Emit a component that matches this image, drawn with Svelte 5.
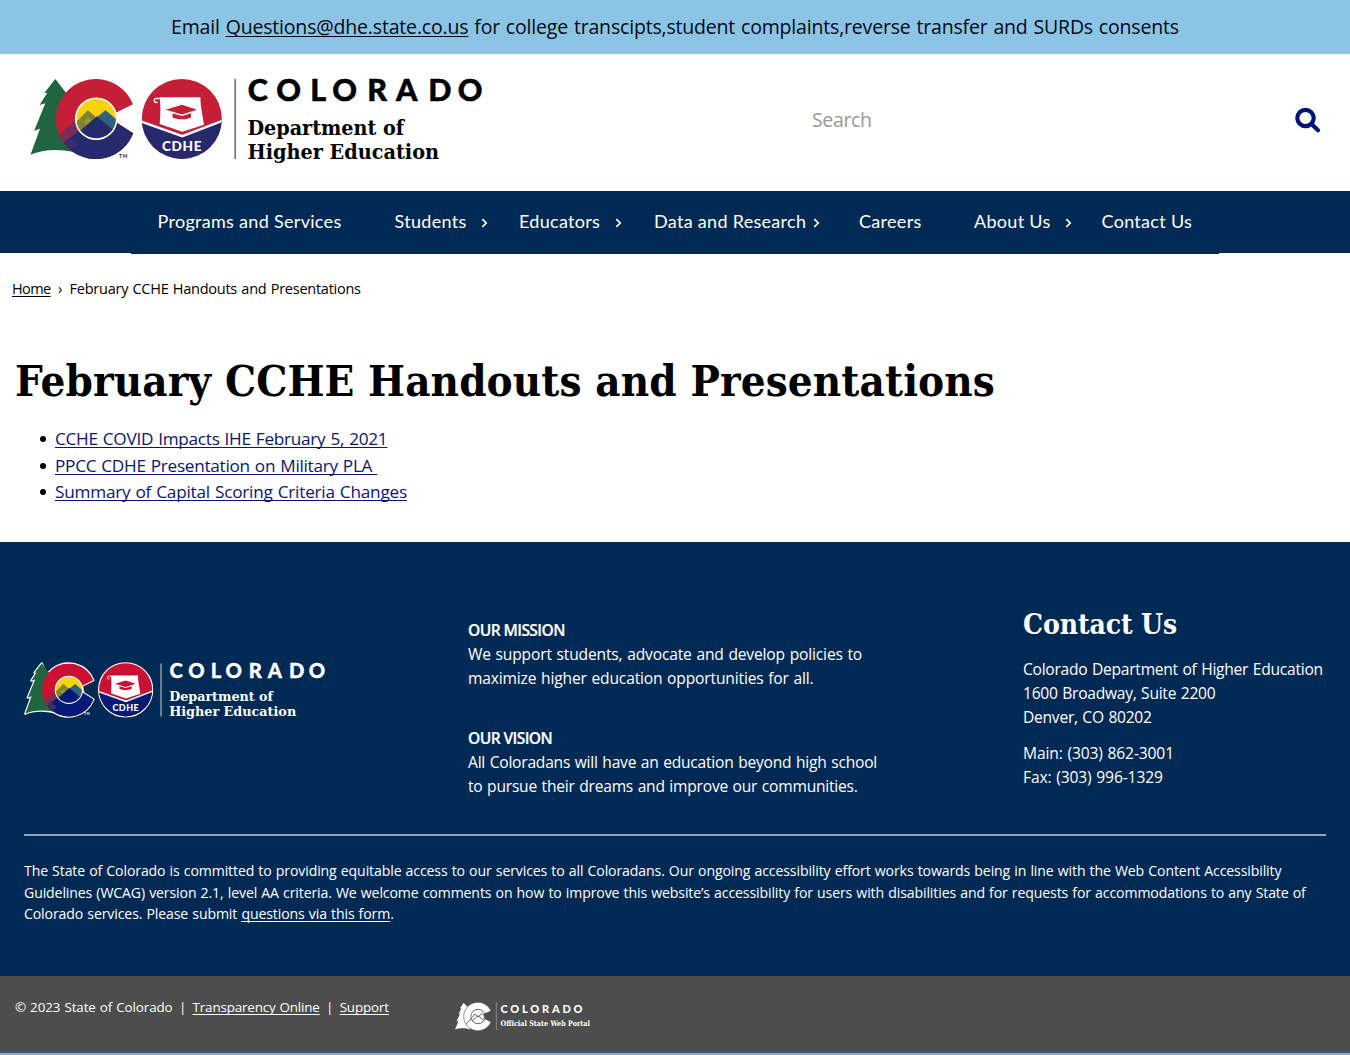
<script>
  const nav = [
    { label: 'Programs and Services', menu: false },
    { label: 'Students', menu: true },
    { label: 'Educators', menu: true },
    { label: 'Data and Research', menu: true, tight: true },
    { label: 'Careers', menu: false },
    { label: 'About Us', menu: true },
    { label: 'Contact Us', menu: false }
  ];
  const files = [
    'CCHE COVID Impacts IHE February 5, 2021',
    'PPCC CDHE Presentation on Military PLA\u00a0',
    'Summary of Capital Scoring Criteria Changes'
  ];
  const letters = '247.8 276.3 310.3 332.3 367.3 396 428.3 457.8';
</script>

{#snippet logo(kind)}
  <svg class="logo {kind}" viewBox="24 74 466 94" role="img" aria-label="Colorado Department of Higher Education">
    <defs>
      <clipPath id="{kind}-c">
        <path d="M133 104.3A40 40 0 1 0 133.2 133.3L118 123.6 110 119 115.8 112.7Z" />
      </clipPath>
      <clipPath id="{kind}-sun"><circle cx="96.2" cy="118.7" r="19.6" /></clipPath>
      <clipPath id="{kind}-seal"><circle cx="181.8" cy="118.9" r="40" /></clipPath>
    </defs>
    <g class="outline">
      <path d="M55.3 79 44.3 93 47.3 92.7 39.6 105 45.3 103.3 34.2 130.7 40 128.7 30.5 154.8C45 148 66 150 80 154L96 158 60 90Z" />
      <path d="M133 104.3A40 40 0 1 0 133.2 133.3L118 123.6 115.8 112.7Z" />
      <circle cx="181.8" cy="118.9" r="40" />
    </g>
    <path class="green" d="M55.3 79 44.3 93 47.3 92.7 39.6 105 45.3 103.3 34.2 130.7 40 128.7 30.5 154.8C42 149.5 58 148.5 74 152L84 150V112L67 94Z" />
    <g clip-path="url(#{kind}-c)">
      <rect class="red" x="50" y="76" width="90" height="86" />
      <path class="plum" d="M50 144 80 116V134L64 146Z" />
      <path class="blue" d="M58 148 62 144.5 80 129.5 100 113 122 123 140 118V165H58Z" />
      <path class="violet" d="M62 144.5 70 137.5 78 145 70 151Z" />
    </g>
    <path class="ring" d="M96.2 97.5A21.3 21.3 0 1 0 96.2 140.1 21.3 21.3 0 1 0 96.2 97.5Z" />
    <g clip-path="url(#{kind}-sun)">
      <rect class="yellow" x="74" y="96" width="45" height="46" />
      <path class="olive" d="M74 125 88 110.2 96 117 105.5 110.2 118 121V140H74Z" />
      <path class="teal" d="M96.5 118.5 105.5 110.2 118 121V136Z" />
      <path class="moss" d="M76 122 88 110.2 96.5 118.5 80 133Z" />
      <path class="gold" d="M84 122 88 117.5 92.5 121.7 87 126Z" />
      <path class="blue" d="M74 136 97 116.2 118 134V142H74Z" />
    </g>
    <g clip-path="url(#{kind}-seal)">
      <rect class="red" x="140" y="77" width="84" height="84" />
      <path class="blue" d="M140 121.5 182.3 137 224 120V162H140Z" />
      <path class="chevron" d="M140 121.2 182.3 136.2 224 120.3" />
    </g>
    <path class="paper" d="M160 97.3H200.5C200 104 202.8 116 204 124.7L182.3 131.8 159.7 124C160.4 115 160.7 107 160 101.8Z" />
    <path class="curl" d="M161 98.5H156.5A2 2 0 1 0 157.5 102" />
    <path class="red" d="M165.8 109.7 182 104.7 197 109.7 182 114.5ZM172.5 113.3 182 116 191 113.3V117.3C187.5 120 176.5 120 172.5 117.3Z" />
    <text class="seal" x="162" y="150.8" textLength="39.5">CDHE</text>
    <text class="tm" x="119" y="157.5" textLength="8.5">TM</text>
    <path class="rule" d="M235.2 79V159" />
    <text class="state" x={letters} y="101.4">COLORADO</text>
    <text class="dept" x="247.5" y="135.3" textLength="156.5" lengthAdjust="spacingAndGlyphs">Department of</text>
    <text class="dept" x="247.5" y="159" textLength="191.5" lengthAdjust="spacingAndGlyphs">Higher Education</text>
  </svg>
{/snippet}

<div class="alert">
  <p>Email <a href="#mail">Questions@dhe.state.co.us</a> for college transcipts,student complaints,reverse transfer and SURDs consents</p>
</div>

<header>
  {@render logo('color')}
  <form class="search">
    <input type="text" placeholder="Search" aria-label="Search" />
    <button type="button" aria-label="Submit search">
      <svg viewBox="0 0 26 25" width="26" height="25"><circle cx="10.5" cy="10" r="8.2" /><path d="M16.5 16 23 22.3" /></svg>
    </button>
  </form>
</header>

<nav>
  <ul>
    {#each nav as item}
      <li>
        <a href="#nav">{item.label}</a>
        {#if item.menu}
          <svg class="caret" class:tight={item.tight} viewBox="0 0 7 10" width="7" height="10"><path d="M1.3 1.2 5.2 5 1.3 8.8" /></svg>
        {/if}
      </li>
    {/each}
  </ul>
</nav>

<main>
  <div class="crumbs"><a href="#home">Home</a><span class="sep">›</span><span>February CCHE Handouts and Presentations</span></div>
  <h1>February CCHE Handouts and Presentations</h1>
  <ul class="files">
    {#each files as label}<li><a href="#file">{label}</a></li>{/each}
  </ul>
</main>

<footer>
  <div class="columns">
    {@render logo('light')}
    <div class="about">
      <section>
        <h3>OUR MISSION</h3>
        <p>We support students, advocate and develop policies to<br />maximize higher education opportunities for all.</p>
      </section>
      <section class="vision">
        <h3>OUR VISION</h3>
        <p>All Coloradans will have an education beyond high school<br />to pursue their dreams and improve our communities.</p>
      </section>
    </div>
    <div class="contact">
      <h2>Contact Us</h2>
      <p>Colorado Department of Higher Education<br />1600 Broadway, Suite 2200<br />Denver, CO 80202</p>
      <p class="phones">Main: (303) 862-3001<br />Fax: (303) 996-1329</p>
    </div>
  </div>
  <p class="legal">
    The State of Colorado is committed to providing equitable access to our services to all Coloradans. Our ongoing accessibility effort works towards being in line with the Web Content Accessibility<br />
    Guidelines (WCAG) version 2.1, level AA criteria. We welcome comments on how to improve this website’s accessibility for users with disabilities and for requests for accommodations to any State of<br />
    Colorado services. Please submit <a href="#form">questions via this form</a>.
  </p>
</footer>

<div class="bottom">
  <p><span>© 2023 State of Colorado</span><i>|</i><a href="#transparency">Transparency Online</a><i>|</i><a href="#support">Support</a></p>
  <svg class="portal" viewBox="0 0 138 30" width="138" height="30" role="img" aria-label="Colorado Official State Web Portal">
    <path class="fill" d="M9.5 2 6 7.5 7.5 7.2 4.5 13 6 12.7 2.5 20.5 4.5 20 1 28.5C7 26.5 12 27.5 16 28.5V8Z" />
    <path class="fill edge" d="M37 10A14.2 14.2 0 1 0 37 21L30.5 17.5 29.8 13Z" />
    <circle class="line" cx="24" cy="15.5" r="7.2" />
    <path class="line" d="M12 23.5 21 13 24 16 28 12.5 31 15.5M18 20 24 14.7 30 19.5" />
    <path class="bar" d="M42.3 1V29" />
    <text class="pstate" x="46.5" y="12.2" textLength="82">COLORADO</text>
    <text class="plabel" x="46.5" y="24.6" textLength="89.5" lengthAdjust="spacingAndGlyphs">Official State Web Portal</text>
  </svg>
</div>
<div class="edge-strip"></div>

<style>
  :global(body) { margin: 0; background: #fff; overflow: hidden; }
  :global(#app) { font-family: 'Open Sans', sans-serif; color: #000; width: 1350px; }
  p, h1, h2, h3, ul { margin: 0; padding: 0; font-weight: 400; }
  ul { list-style: none; }
  a { color: inherit; text-underline-offset: 1.5px; text-decoration-thickness: 1.3px; text-decoration-skip-ink: none; }
  svg { overflow: visible; flex: none; }

  .alert { height: 53px; background: #8cc4e6; border-bottom: 1px solid #a9bfd6; display: flex; justify-content: center; align-items: center; }
  .alert p { font-size: 19.5px; letter-spacing: -0.18px; word-spacing: 1px; white-space: nowrap; color: #000a14; }

  header { height: 137px; display: flex; align-items: flex-start; justify-content: space-between; padding: 20px 29px 0 24px; box-sizing: border-box; }
  .logo.color { width: 466px; height: 94px; }
  .logo.light { width: 309px; height: 62.5px; }
  .search { display: flex; align-items: center; width: 509px; padding-top: 32px; }
  .search input { flex: 1; border: 0; padding: 0 0 2px; height: 26px; font: 19.5px 'Open Sans', sans-serif; letter-spacing: -0.35px; outline: 0; }
  .search input::placeholder { color: #999; opacity: 1; }
  .search button { border: 0; background: none; padding: 0; display: flex; }
  .search button svg { fill: none; stroke: #04117c; stroke-width: 4.2; stroke-linecap: round; }

  nav { height: 62px; background: #002a54; }
  nav ul { display: grid; grid-template-columns: 237px 124.5px 135px 205px 115px 127.5px 91px; height: 63px; width: 1088px; margin: 0 auto; padding: 0 0 3px 26.5px; box-sizing: border-box; background: #002a54; }
  nav li { display: flex; align-items: center; white-space: nowrap; }
  nav a { font: 18px/24px Lato, sans-serif; letter-spacing: 0.3px; color: #fff; text-decoration: none; }
  .caret { margin-left: 14.5px; margin-top: 4px; fill: none; stroke: #fff; stroke-width: 1.7; }
  .caret.tight { margin-left: 7px; }

  main { height: 289px; padding-top: 25px; box-sizing: border-box; }
  .crumbs { display: flex; padding-left: 12px; font-size: 14.5px; line-height: 22px; letter-spacing: -0.25px; word-spacing: 0.8px; }
  .crumbs a { letter-spacing: -0.6px; }
  .sep { width: 19px; text-align: center; }
  h1 { font: 700 43.5px/56px 'DejaVu Serif Condensed', 'DejaVu Serif', serif; font-stretch: condensed; letter-spacing: 0.09px; padding: 53px 0 0 15px; white-space: nowrap; }
  .files { padding: 17px 0 0 55px; }
  .files li { font-size: 17.2px; line-height: 26.5px; height: 26.5px; white-space: nowrap; display: flex; align-items: center; }
  .files li::before { content: ''; width: 6px; height: 6px; border-radius: 50%; background: #000; margin: 0 9px 0 -15px; }
  .files a { color: #0a1670; letter-spacing: -0.27px; word-spacing: 0.8px; }
  .files li:last-child a { letter-spacing: -0.22px; }

  footer { height: 434px; background: #002a54; color: #fff; padding: 62px 24px 0; box-sizing: border-box; }
  .columns { display: grid; grid-template-columns: 444px 555px 1fr; height: 232px; border-bottom: 2px solid #93a4b6; box-sizing: border-box; }
  .columns .logo { margin: 55.5px 0 0 -3px; }
  .about { padding-top: 14px; }
  .about section + section { margin-top: 36px; }
  .about p, .contact p { font-size: 15.6px; line-height: 24px; letter-spacing: -0.16px; word-spacing: 0.8px; white-space: nowrap; }
  .about .vision p { letter-spacing: -0.23px; }
  .contact p { letter-spacing: -0.26px; margin-top: 12px; }
  .contact .phones { letter-spacing: -0.12px; }
  h3 { font-size: 15.6px; line-height: 24px; font-weight: 600; letter-spacing: -0.6px; -webkit-text-stroke: 0.2px #fff; }
  h2 { font: 700 28px/40px 'DejaVu Serif Condensed', 'DejaVu Serif', serif; font-stretch: condensed; padding-top: 1px; letter-spacing: -0.1px; }
  .legal { font-size: 14.1px; line-height: 21.5px; letter-spacing: -0.117px; word-spacing: 0.6px; padding-top: 24px; white-space: nowrap; }

  .bottom { height: 74px; background: #4d4d4d; color: #fff; display: flex; align-items: flex-start; }
  .bottom p { display: flex; width: 439px; padding: 21px 0 0 15px; box-sizing: border-box; font-size: 13.4px; line-height: 20px; letter-spacing: -0.1px; word-spacing: 0.7px; white-space: nowrap; }
  .bottom a { letter-spacing: -0.16px; }
  .bottom i { font-style: normal; width: 20px; text-align: center; }
  .portal { margin: 25px 0 0 15px; }
  .edge-strip { height: 2px; background: #44566a; border-top: 1px solid #4d5257; border-bottom: 2px solid #8db0cf; }

  .logo text, .portal text { font-family: Lato, sans-serif; }
  .red { fill: #c41f37; }
  .blue { fill: #252a6c; }
  .green { fill: #1f6640; }
  .plum { fill: #7d2c55; }
  .violet { fill: #3a2b6b; }
  .ring { fill: #fff; }
  .yellow { fill: #fcd20b; }
  .olive { fill: #a89a20; }
  .moss { fill: #7c8434; }
  .gold { fill: #a5972b; }
  .teal { fill: #2d6283; }
  .chevron { fill: none; stroke: #fff; stroke-width: 2.4; }
  .paper { fill: #fff; }
  .curl { fill: none; stroke: #fff; stroke-width: 1.3; }
  .outline { display: none; }
  .rule { stroke: #77787b; stroke-width: 1.7; }
  .logo .seal { font: 900 13.6px Lato, sans-serif; fill: #fff; }
  .logo .tm { font: 700 5px Lato, sans-serif; fill: #222; }
  .logo .state { font: 900 30.5px Lato, sans-serif; fill: #000; stroke: #000; stroke-width: 0.5; }
  .logo .dept { font: 700 20.8px 'DejaVu Serif Condensed', 'DejaVu Serif', serif; font-stretch: condensed; fill: #000; }
  .light .outline { display: inline; fill: #fff; stroke: #fff; stroke-width: 3.4; stroke-linejoin: round; }
  .light .rule { stroke: #b4c2d2; }
  .light .state, .light .dept, .light .tm { fill: #fff; }
  .light .state { stroke: #fff; }
  .light .blue { fill: #041a78; }
  .light .red { fill: #cb1034; }
  .fill { fill: #fff; }
  .edge { stroke: #4d4d4d; stroke-width: 0.6; }
  .line { fill: none; stroke: #5a5a5a; stroke-width: 0.9; }
  .bar { stroke: #999; stroke-width: 0.8; }
  .portal .pstate { font: 900 11px Lato, sans-serif; fill: #fff; }
  .portal .plabel { font: 700 7.6px 'DejaVu Serif Condensed', 'DejaVu Serif', serif; fill: #fff; }
</style>
